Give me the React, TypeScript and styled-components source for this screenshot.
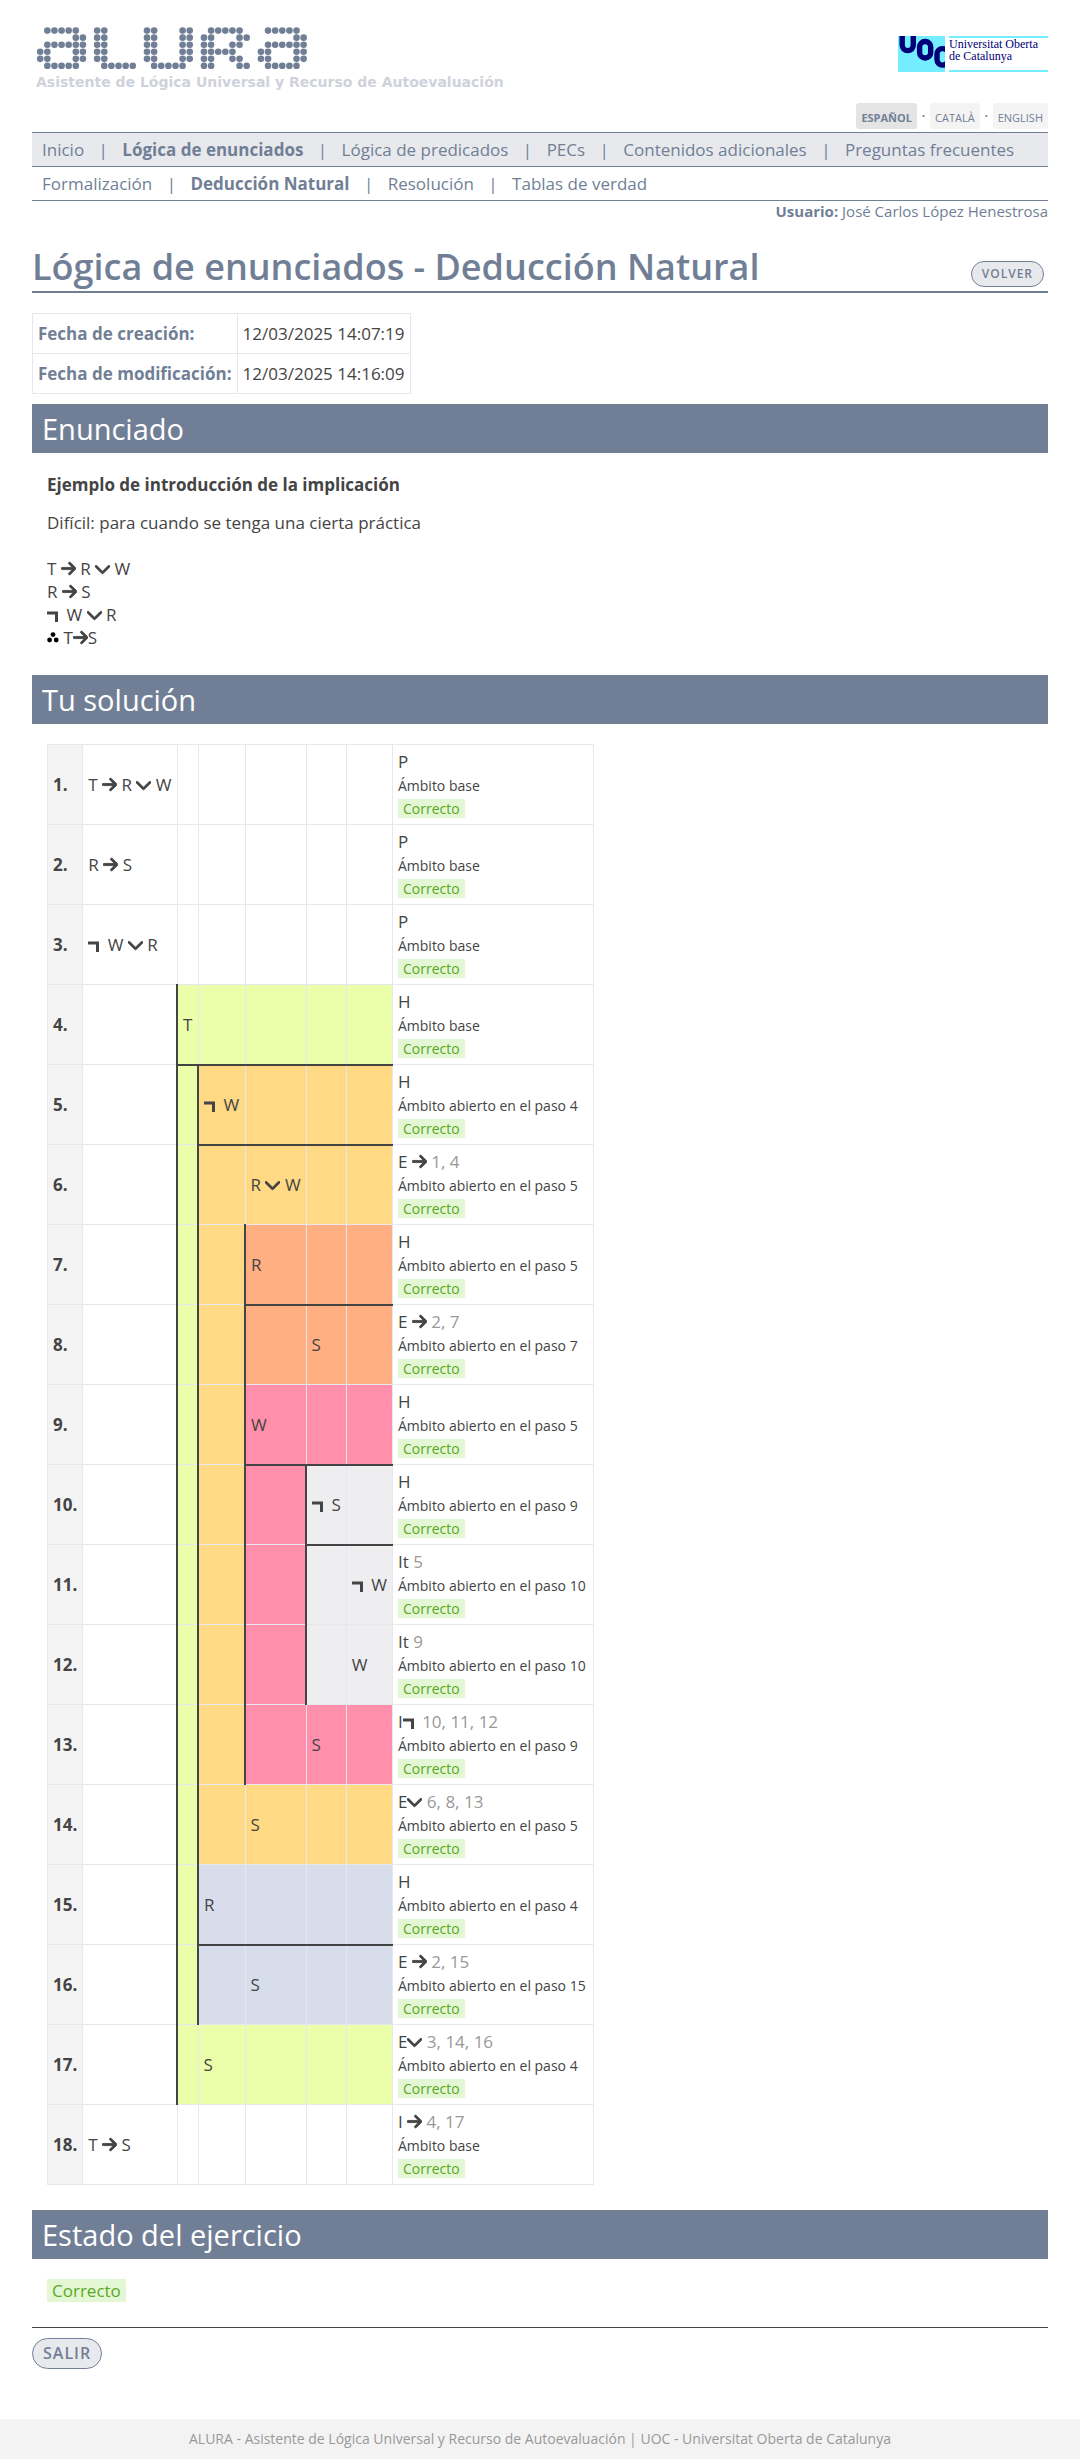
import React from "react";
import styled, { createGlobalStyle, css } from "styled-components";

const slate = "#717f96";
const ink = "#444444";
const line = "#e8e8ec";
const panel = "#e8e9ed";
const muted = "#999999";

const GlobalStyle = createGlobalStyle`
  * { box-sizing: border-box; }
  body {
    margin: 0;
    background: #ffffff;
    color: ${ink};
    font-family: "Open Sans", "Noto Sans", sans-serif;
    font-size: 17px;
    line-height: 23px;
  }
`;

const Page = styled.div`
  display: flex;
  flex-direction: column;
  min-height: 100vh;
`;

const Content = styled.div`
  flex: 1;
  padding: 0 32px 50px;
`;

/* Header */

const Header = styled.header`
  display: flex;
  justify-content: space-between;
  align-items: flex-start;
  padding: 27px 0 3px;
`;

const Brand = styled.a`
  display: block;
  padding-left: 4px;
  text-decoration: none;
`;

const Tagline = styled.span`
  display: block;
  margin-top: 6px;
  color: #cfd2dc;
  font: bold 14px/15px "DejaVu Sans", sans-serif;
`;

const HeaderSide = styled.div`
  display: flex;
  flex-direction: column;
  align-items: flex-end;
  gap: 31px;
  padding-top: 9px;
`;

const University = styled.a`
  display: flex;
  gap: 4px;
  height: 36px;
  text-decoration: none;
`;

const UniversityName = styled.span`
  width: 99px;
  border: solid #73edff;
  border-width: 2px 0;
  color: #000078;
  font: 12px/12px "Liberation Serif", serif;
  white-space: nowrap;
`;

const Languages = styled.nav`
  display: flex;
  color: ${slate};
`;

const Dot = styled.span`
  width: 13px;
  line-height: 26px;
  text-align: center;
`;

const Language = styled.a<{ $active?: boolean }>`
  padding: 7px 5px 4px;
  border-radius: 3px;
  background: ${(p) => (p.$active ? "#e4e4e4" : "#f4f4f4")};
  color: ${slate};
  font-size: 11px;
  font-weight: ${(p) => (p.$active ? 700 : 400)};
  line-height: 15px;
  text-decoration: none;
  text-transform: uppercase;
`;

const Menu = styled.nav<{ $main?: boolean }>`
  padding: 5px 0;
  border-bottom: 1px solid ${slate};
  color: ${slate};
  ${(p) =>
    p.$main &&
    css`
      border-top: 1px solid ${slate};
      background: ${panel};
    `}
`;

const MenuLink = styled.a<{ $active?: boolean }>`
  padding: 0 10px;
  color: ${slate};
  font-weight: ${(p) => (p.$active ? 700 : 400)};
  text-decoration: none;
`;

const User = styled.p`
  margin: 0;
  color: ${slate};
  font-size: 15px;
  line-height: 20px;
  text-align: right;
`;

const TitleBar = styled.div`
  display: flex;
  justify-content: space-between;
  align-items: flex-end;
  margin: 21px 0 20px;
  border-bottom: 2px solid ${slate};
`;

const Title = styled.h1`
  margin: 0;
  color: ${slate};
  font-size: 36px;
  font-weight: 600;
  line-height: 49px;
`;

const Pill = styled.button<{ $small?: boolean }>`
  padding: 4px 10px;
  border: 1px solid ${slate};
  border-radius: 16px;
  background: ${panel};
  color: ${slate};
  font-family: inherit;
  font-size: ${(p) => (p.$small ? 12 : 16)}px;
  font-weight: 600;
  line-height: ${(p) => (p.$small ? 16 : 21)}px;
  letter-spacing: 1px;
  text-transform: uppercase;
  ${(p) => p.$small && "margin: 0 4px 4px 0;"}
`;

/* Sections */

const SectionTitle = styled.h2`
  margin: 0;
  padding: 5px 10px;
  background: ${slate};
  color: #ffffff;
  font-size: 29px;
  font-weight: 400;
  line-height: 39px;
`;

const Section = styled.section`
  padding: 20px 15px 25px;
`;

const Paragraph = styled.p`
  margin: 0 0 15px;
`;

const Formulas = styled.div`
  padding-top: 8px;
`;

const Premise = styled.div`
  min-height: 23px;
`;

const Conclusion = styled.div`
  line-height: 24px;
`;

const Badge = styled.span<{ $small?: boolean }>`
  padding: 0 5px;
  background: #e4f7d4;
  color: #5aa823;
  ${(p) => p.$small && "font-size: 14px; line-height: 1;"}
`;

const Small = styled.span`
  font-size: 14px;
  line-height: 1;
`;

const Refs = styled.span`
  color: ${muted};
`;

/* Tables */

const MetaTable = styled.table`
  margin-bottom: 10px;
  border-collapse: collapse;

  th,
  td {
    padding: 8px 5px;
    border: 1px solid ${line};
    text-align: left;
  }

  th {
    color: ${slate};
  }
`;

const Proof = styled.table`
  border-collapse: collapse;
  white-space: nowrap;

  th,
  td {
    padding: 5px;
    border: 1px solid ${line};
    text-align: left;
  }
`;

const Column = styled.col<{ $width: number }>`
  width: ${(p) => p.$width}px;
`;

const StepNumber = styled.th`
  background: #f4f4f4;
`;

const StepCell = styled.td<{ $fill?: string; $edge: boolean; $rule: boolean }>`
  background: ${(p) => p.$fill || "transparent"};

  && {
    ${(p) => p.$edge && `border-left: 2px solid ${ink};`}
    ${(p) => p.$rule && `border-bottom: 2px solid ${ink};`}
  }
`;

const Divider = styled.hr`
  margin: 0 0 10px;
  border: 0;
  border-top: 1px solid ${ink};
`;

const Footer = styled.footer`
  padding: 10px 32px;
  background: #f3f3f3;
  color: ${muted};
  font-size: 14px;
  line-height: 20px;
  text-align: center;
`;

/* Symbols */

const Glyph = styled.svg`
  display: inline-block;
  width: 15px;
  height: 17px;
  vertical-align: -2px;
  fill: currentColor;
`;

const ThereforeGlyph = styled.svg`
  display: inline-block;
  width: 12px;
  height: 12px;
  fill: #000000;
`;

const Implies = () => (
  <Glyph viewBox="0 0 448 512" stroke="currentColor" strokeWidth="26" role="img" aria-label="implica">
    <path d="M438.6 278.6c12.5-12.5 12.5-32.8 0-45.3l-160-160c-12.5-12.5-32.8-12.5-45.3 0s-12.5 32.8 0 45.3L338.8 224 32 224c-17.7 0-32 14.3-32 32s14.3 32 32 32l306.7 0L233.4 393.4c-12.5 12.5-12.5 32.8 0 45.3s32.8 12.5 45.3 0l160-160z" />
  </Glyph>
);

const Or = () => (
  <Glyph viewBox="32 0 448 512" stroke="currentColor" strokeWidth="22" role="img" aria-label="o">
    <path d="M233.4 406.6c12.5 12.5 32.8 12.5 45.3 0l192-192c12.5-12.5 12.5-32.8 0-45.3s-32.8-12.5-45.3 0L256 338.7 86.6 169.4c-12.5-12.5-32.8-12.5-45.3 0s-12.5 32.8 0 45.3l192 192z" />
  </Glyph>
);

const Not = () => (
  <Glyph viewBox="0 0 15 17" role="img" aria-label="no">
    <path d="M0 5.5h11v10.5h-3v-7.6h-8z" />
  </Glyph>
);

const Therefore = () => (
  <ThereforeGlyph viewBox="0 0 12 12" role="img" aria-label="por lo tanto">
    <circle cx="6" cy="2.6" r="2.4" />
    <circle cx="2.6" cy="8" r="2.4" />
    <circle cx="9.2" cy="8" r="2.4" />
  </ThereforeGlyph>
);

const Formula = ({ text }: { text: string }) => (
  <>
    {text.split(/([→∨¬])/).map((part, i) => {
      if (part === "→") return <Implies key={i} />;
      if (part === "∨") return <Or key={i} />;
      if (part === "¬") return <Not key={i} />;
      return part;
    })}
  </>
);

/* Logos */

const letterA = [".#####.", ".....##", ".######", "##...##", "##...##", ".#####."];
const letterL = ["##....", "##....", "##....", "##....", "##....", ".#####"];
const letterU = ["##...##", "##...##", "##...##", "##...##", "##...##", ".#####."];
const letterR = [".#####.", "##...##", "##..##.", "#####..", "##..##.", "##...##"];
const wordmark: [number, string[]][] = [
  [0, letterA],
  [8, letterL],
  [15, letterU],
  [23, letterR],
  [31, letterA],
];

const AluraLogo = () => (
  <svg width="274" height="42" viewBox="0 0 274 42" fill={slate} display="block" role="img" aria-label="ALURA">
    {wordmark.map(([start, rows]) =>
      rows.map((row, y) =>
        row
          .split("")
          .map((dot, x) =>
            dot === "#" ? (
              <circle key={`${start}-${x}-${y}`} cx={4.2 + (start + x) * 7.12} cy={3.6 + y * 7.06} r="3.3" />
            ) : null
          )
      )
    )}
  </svg>
);

const UocLogo = () => (
  <svg width="47" height="36" viewBox="0 0 47 36" role="img" aria-label="UOC">
    <rect width="47" height="36" fill="#73edff" />
    <g fill="none" stroke="#000078" strokeWidth="5.4">
      <rect x="4.2" y="-10" width="11.1" height="24.6" rx="5.5" />
      <rect x="21.6" y="5.5" width="11.1" height="16.5" rx="5.5" />
      <rect x="39" y="12.6" width="11.1" height="16.5" rx="5.5" />
    </g>
  </svg>
);

/* Data */

const lime = "#ebffab";
const amber = "#ffd983";
const orange = "#ffaf82";
const pink = "#ff8fab";
const grey = "#eeeef1";
const blue = "#d8ddec";

type Step = {
  formula: string;
  scopes: string[];
  rule: string;
  refs?: string;
  scope: string;
};

const steps: Step[] = [
  { formula: "T → R ∨ W", scopes: [], rule: "P", scope: "Ámbito base" },
  { formula: "R → S", scopes: [], rule: "P", scope: "Ámbito base" },
  { formula: "¬ W ∨ R", scopes: [], rule: "P", scope: "Ámbito base" },
  { formula: "T", scopes: [lime], rule: "H", scope: "Ámbito base" },
  { formula: "¬ W", scopes: [lime, amber], rule: "H", scope: "Ámbito abierto en el paso 4" },
  { formula: "R ∨ W", scopes: [lime, amber], rule: "E →", refs: "1, 4", scope: "Ámbito abierto en el paso 5" },
  { formula: "R", scopes: [lime, amber, orange], rule: "H", scope: "Ámbito abierto en el paso 5" },
  { formula: "S", scopes: [lime, amber, orange], rule: "E →", refs: "2, 7", scope: "Ámbito abierto en el paso 7" },
  { formula: "W", scopes: [lime, amber, pink], rule: "H", scope: "Ámbito abierto en el paso 5" },
  { formula: "¬ S", scopes: [lime, amber, pink, grey], rule: "H", scope: "Ámbito abierto en el paso 9" },
  { formula: "¬ W", scopes: [lime, amber, pink, grey], rule: "It", refs: "5", scope: "Ámbito abierto en el paso 10" },
  { formula: "W", scopes: [lime, amber, pink, grey], rule: "It", refs: "9", scope: "Ámbito abierto en el paso 10" },
  { formula: "S", scopes: [lime, amber, pink], rule: "I¬", refs: "10, 11, 12", scope: "Ámbito abierto en el paso 9" },
  { formula: "S", scopes: [lime, amber], rule: "E∨", refs: "6, 8, 13", scope: "Ámbito abierto en el paso 5" },
  { formula: "R", scopes: [lime, blue], rule: "H", scope: "Ámbito abierto en el paso 4" },
  { formula: "S", scopes: [lime, blue], rule: "E →", refs: "2, 15", scope: "Ámbito abierto en el paso 15" },
  { formula: "S", scopes: [lime], rule: "E∨", refs: "3, 14, 16", scope: "Ámbito abierto en el paso 4" },
  { formula: "T → S", scopes: [], rule: "I →", refs: "4, 17", scope: "Ámbito base" },
];

const levels = [0, 1, 2, 3, 4, 5];
const columnWidths = [35, 94, 21, 47, 61, 40, 46, 201];

const mainMenu = [
  "Inicio",
  "Lógica de enunciados",
  "Lógica de predicados",
  "PECs",
  "Contenidos adicionales",
  "Preguntas frecuentes",
];
const subMenu = ["Formalización", "Deducción Natural", "Resolución", "Tablas de verdad"];

const MenuItems = ({ items, active }: { items: string[]; active: string }) => (
  <>
    {items.map((item, i) => (
      <React.Fragment key={item}>
        {i > 0 && " | "}
        <MenuLink href="#" $active={item === active}>
          {item}
        </MenuLink>
      </React.Fragment>
    ))}
  </>
);

const ProofRow = ({ step, number }: { step: Step; number: number }) => {
  const depth = step.scopes.length;
  const opens = step.rule === "H";
  const formulaLevel = depth === 0 || opens ? depth : depth + 1;
  return (
    <tr>
      <StepNumber scope="row">{number}.</StepNumber>
      {levels.map((level) => (
        <StepCell
          key={level}
          $fill={level > 0 ? step.scopes[Math.min(level, depth) - 1] : undefined}
          $edge={level > 0 && level <= depth}
          $rule={opens && level >= depth}
        >
          {level === formulaLevel && <Formula text={step.formula} />}
        </StepCell>
      ))}
      <td>
        <div>
          <Formula text={step.rule} />
          {step.refs && <Refs> {step.refs}</Refs>}
        </div>
        <div>
          <Small>{step.scope}</Small>
        </div>
        <div>
          <Badge $small>Correcto</Badge>
        </div>
      </td>
    </tr>
  );
};

export default function App() {
  return (
    <Page>
      <GlobalStyle />
      <Content>
        <Header>
          <Brand href="#">
            <AluraLogo />
            <Tagline>Asistente de Lógica Universal y Recurso de Autoevaluación</Tagline>
          </Brand>
          <HeaderSide>
            <University href="#">
              <UocLogo />
              <UniversityName>
                Universitat Oberta
                <br />
                de Catalunya
              </UniversityName>
            </University>
            <Languages>
              <Language href="#" $active>
                Español
              </Language>
              <Dot>·</Dot>
              <Language href="#">Català</Language>
              <Dot>·</Dot>
              <Language href="#">English</Language>
            </Languages>
          </HeaderSide>
        </Header>

        <Menu $main>
          <MenuItems items={mainMenu} active="Lógica de enunciados" />
        </Menu>
        <Menu>
          <MenuItems items={subMenu} active="Deducción Natural" />
        </Menu>
        <User>
          <strong>Usuario:</strong> José Carlos López Henestrosa
        </User>

        <main>
          <TitleBar>
            <Title>Lógica de enunciados - Deducción Natural</Title>
            <Pill type="button" $small>
              Volver
            </Pill>
          </TitleBar>

          <MetaTable>
            <tbody>
              <tr>
                <th scope="row">Fecha de creación:</th>
                <td>12/03/2025 14:07:19</td>
              </tr>
              <tr>
                <th scope="row">Fecha de modificación:</th>
                <td>12/03/2025 14:16:09</td>
              </tr>
            </tbody>
          </MetaTable>

          <SectionTitle>Enunciado</SectionTitle>
          <Section>
            <Paragraph>
              <strong>Ejemplo de introducción de la implicación</strong>
            </Paragraph>
            <Paragraph>Difícil: para cuando se tenga una cierta práctica</Paragraph>
            <Formulas>
              <Premise>
                <Formula text="T → R ∨ W" />
              </Premise>
              <Premise>
                <Formula text="R → S" />
              </Premise>
              <Premise>
                <Formula text="¬ W ∨ R" />
              </Premise>
              <Conclusion>
                <Therefore /> <Formula text="T→S" />
              </Conclusion>
            </Formulas>
          </Section>

          <SectionTitle>Tu solución</SectionTitle>
          <Section>
            <Proof>
              <colgroup>
                {columnWidths.map((width, i) => (
                  <Column key={i} $width={width} />
                ))}
              </colgroup>
              <tbody>
                {steps.map((step, i) => (
                  <ProofRow key={i} step={step} number={i + 1} />
                ))}
              </tbody>
            </Proof>
          </Section>

          <SectionTitle>Estado del ejercicio</SectionTitle>
          <Section>
            <Badge>Correcto</Badge>
          </Section>
          <Divider />
          <Pill type="button">Salir</Pill>
        </main>
      </Content>
      <Footer>
        ALURA - Asistente de Lógica Universal y Recurso de Autoevaluación | UOC - Universitat Oberta de Catalunya
      </Footer>
    </Page>
  );
}
